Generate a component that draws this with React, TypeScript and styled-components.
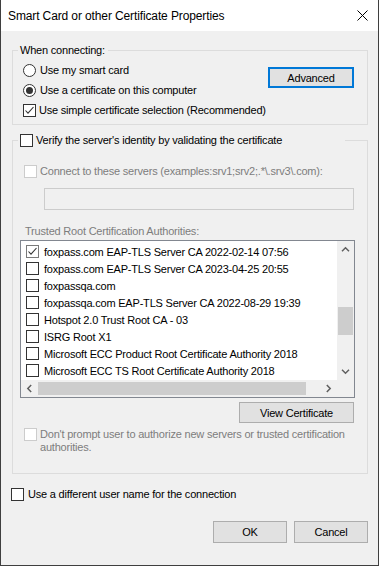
import styled, { createGlobalStyle } from "styled-components"

const GlobalStyle = createGlobalStyle`
  body {
    margin: 0;
    background: #ffffff;
  }
  * {
    box-sizing: border-box;
  }
`

const authorities = [
  { name: "foxpass.com EAP-TLS Server CA 2022-02-14 07:56", checked: true },
  { name: "foxpass.com EAP-TLS Server CA 2023-04-25 20:55" },
  { name: "foxpassqa.com" },
  { name: "foxpassqa.com EAP-TLS Server CA 2022-08-29 19:39" },
  { name: "Hotspot 2.0 Trust Root CA - 03" },
  { name: "ISRG Root X1" },
  { name: "Microsoft ECC Product Root Certificate Authority 2018" },
  { name: "Microsoft ECC TS Root Certificate Authority 2018" },
]

const CheckMark = () => (
  <svg width="11" height="11" viewBox="0 0 11 11">
    <polyline points="1.5,5.5 4,8.2 9.5,2" fill="none" stroke="#333" strokeWidth="1.1" />
  </svg>
)

const Chevron = ({ dir }: { dir: "up" | "down" | "left" | "right" }) => {
  const rot = { up: 0, right: 90, down: 180, left: 270 }[dir]
  return (
    <svg width="9" height="9" viewBox="0 0 9 9" style={{ transform: `rotate(${rot}deg)` }}>
      <polyline points="1,6.2 4.5,2.8 8,6.2" fill="none" stroke="#606060" strokeWidth="1.5" />
    </svg>
  )
}

export default function App() {
  return (
    <>
      <GlobalStyle />
      <Window>
        <TitleBar>
          <Title>Smart Card or other Certificate Properties</Title>
          <svg width="11" height="11" viewBox="0 0 11 11">
            <path d="M0.5 0.5 L10.5 10.5 M10.5 0.5 L0.5 10.5" stroke="#000" strokeWidth="1" />
          </svg>
        </TitleBar>

        <Body>
          <GroupBox>
            <Legend>When connecting:</Legend>
            <ConnectGrid>
              <Options>
                <OptionRow>
                  <Radio />
                  <Label>Use my smart card</Label>
                </OptionRow>
                <OptionRow>
                  <Radio $checked />
                  <Label>Use a certificate on this computer</Label>
                </OptionRow>
                <OptionRow>
                  <CheckBox>
                    <CheckMark />
                  </CheckBox>
                  <Label>Use simple certificate selection (Recommended)</Label>
                </OptionRow>
              </Options>
              <AdvancedButton $default>Advanced</AdvancedButton>
            </ConnectGrid>
          </GroupBox>

          <GroupBox $gap={15}>
            <Legend $width={327}>
              <OptionRow>
                <CheckBox />
                <Label>Verify the server's identity by validating the certificate</Label>
              </OptionRow>
            </Legend>
            <ServerSection>
              <OptionRow>
                <CheckBox $disabled />
                <Label $disabled>Connect to these servers (examples:srv1;srv2;.*\.srv3\.com):</Label>
              </OptionRow>
              <TextBox />
              <SectionLabel>Trusted Root Certification Authorities:</SectionLabel>
              <ListBox>
                <ListContent>
                  {authorities.map((a) => (
                    <ListRow key={a.name}>
                      <CheckBox $soft={a.checked}>{a.checked && <CheckMark />}</CheckBox>
                      <span>{a.name}</span>
                    </ListRow>
                  ))}
                </ListContent>
                <VScroll>
                  <ArrowCell>
                    <Chevron dir="up" />
                  </ArrowCell>
                  <VTrack>
                    <VThumb />
                  </VTrack>
                  <ArrowCell>
                    <Chevron dir="down" />
                  </ArrowCell>
                </VScroll>
                <HScroll>
                  <ArrowCell>
                    <Chevron dir="left" />
                  </ArrowCell>
                  <HTrack>
                    <HThumb />
                  </HTrack>
                  <ArrowCell>
                    <Chevron dir="right" />
                  </ArrowCell>
                </HScroll>
                <Corner />
              </ListBox>
              <ViewButton>View Certificate</ViewButton>
              <PromptRow>
                <CheckBox $disabled />
                <Label $disabled>
                  Don't prompt user to authorize new servers or trusted certification authorities.
                </Label>
              </PromptRow>
            </ServerSection>
          </GroupBox>

          <UserRow>
            <CheckBox />
            <Label>Use a different user name for the connection</Label>
          </UserRow>

          <Footer>
            <DialogButton>OK</DialogButton>
            <DialogButton>Cancel</DialogButton>
          </Footer>
        </Body>
      </Window>
    </>
  )
}

const Window = styled.div`
  width: 379px;
  height: 566px;
  display: flex;
  flex-direction: column;
  background: #f0f0f0;
  border: 1px solid #3f3f3f;
  border-top: none;
  font-family: "Liberation Sans", Arial, sans-serif;
  font-size: 11px;
  letter-spacing: -0.2px;
  color: #000;
`

const TitleBar = styled.div`
  height: 31px;
  flex: none;
  display: flex;
  align-items: center;
  justify-content: space-between;
  padding: 0 10px 0 7px;
  background: #ffffff;
`

const Title = styled.div`
  font-size: 12px;
  letter-spacing: -0.12px;
`

const Body = styled.div`
  display: flex;
  flex-direction: column;
  padding: 19px 10px 0 11px;
`

const GroupBox = styled.div<{ $gap?: number }>`
  display: flex;
  flex-direction: column;
  margin-top: ${(p) => p.$gap ?? 0}px;
  border: 1px solid #dcdcdc;
`

const Legend = styled.div<{ $width?: number }>`
  margin: -8px 0 0 5px;
  height: 15px;
  line-height: 15px;
  padding: 0 3px 0 2px;
  width: ${(p) => (p.$width ? `${p.$width}px` : "fit-content")};
  background: #f0f0f0;
  display: flex;
  align-items: center;
`

const ConnectGrid = styled.div`
  display: grid;
  grid-template-columns: 1fr auto;
  margin-top: 2px;
  padding: 0 13px 4px 10px;
`

const Options = styled.div`
  display: flex;
  flex-direction: column;
`

const OptionRow = styled.div`
  height: 20px;
  display: flex;
  align-items: center;
  gap: 3px;
`

const Label = styled.span<{ $disabled?: boolean }>`
  color: ${(p) => (p.$disabled ? "#7d7d7d" : "#000")};
  white-space: ${(p) => (p.$disabled ? "normal" : "nowrap")};
`

const Radio = styled.span<{ $checked?: boolean }>`
  width: 13px;
  height: 13px;
  flex: none;
  border-radius: 50%;
  border: 1px solid #333;
  background: #fff;
  margin-right: 1px;
  display: flex;
  align-items: center;
  justify-content: center;
  &::after {
    content: "";
    width: 7px;
    height: 7px;
    border-radius: 50%;
    background: ${(p) => (p.$checked ? "#333" : "transparent")};
  }
`

const CheckBox = styled.span<{ $disabled?: boolean; $soft?: boolean }>`
  width: 13px;
  height: 13px;
  flex: none;
  display: flex;
  align-items: center;
  justify-content: center;
  background: #fff;
  border: 1px solid ${(p) => (p.$disabled ? "#cccccc" : p.$soft ? "#7a7a7a" : "#333")};
`

const Button = styled.div`
  display: flex;
  align-items: center;
  justify-content: center;
  background: #e1e1e1;
  border: 1px solid #adadad;
  color: #000;
`

const AdvancedButton = styled(Button)<{ $default?: boolean }>`
  width: 86px;
  height: 21px;
  margin-top: 7px;
  align-self: start;
  border: ${(p) => (p.$default ? "2px solid #0078d7" : "1px solid #adadad")};
`

const ServerSection = styled.div`
  display: flex;
  flex-direction: column;
  padding: 13px 13px 19px 11px;
`

const TextBox = styled.div`
  height: 22px;
  margin: 7px 0 0 20px;
  width: 310px;
  border: 1px solid #cccccc;
  background: #f0f0f0;
`

const SectionLabel = styled.div`
  height: 15px;
  line-height: 15px;
  margin: 14px 0 0 1px;
  color: #7d7d7d;
`

const ListBox = styled.div`
  margin: 1px 0 0 -4px;
  width: 335px;
  height: 158px;
  border: 1px solid #828790;
  background: #fff;
  display: grid;
  grid-template-columns: 1fr 17px;
  grid-template-rows: 1fr 17px;
`

const ListContent = styled.div`
  padding: 2px 0 0 5px;
  overflow: hidden;
  border-right: 1px solid #fff;
`

const ListRow = styled.div`
  height: 17px;
  display: flex;
  align-items: center;
  gap: 5px;
  white-space: nowrap;
`

const VScroll = styled.div`
  display: flex;
  flex-direction: column;
  background: #f0f0f0;
`

const ArrowCell = styled.div`
  width: 17px;
  height: 17px;
  flex: none;
  display: flex;
  align-items: center;
  justify-content: center;
`

const VTrack = styled.div`
  flex: 1;
  display: flex;
  flex-direction: column;
`

const VThumb = styled.div`
  margin: 49px 1px 0 1px;
  height: 28px;
  background: #cdcdcd;
`

const HScroll = styled.div`
  display: flex;
  background: #f0f0f0;
`

const HTrack = styled.div`
  flex: 1;
  display: flex;
  align-items: center;
`

const HThumb = styled.div`
  width: 268px;
  height: 13px;
  background: #cdcdcd;
`

const Corner = styled.div`
  background: #f0f0f0;
`

const ViewButton = styled(Button)`
  align-self: flex-end;
  width: 115px;
  height: 21px;
  margin-top: 4px;
`

const PromptRow = styled.div`
  display: flex;
  align-items: flex-start;
  gap: 3px;
  margin-top: 5px;
  line-height: 13px;
`

const UserRow = styled(OptionRow)`
  margin: 10px 0 0 -1px;
  gap: 4px;
`

const Footer = styled.div`
  display: flex;
  justify-content: flex-end;
  gap: 7px;
  margin-top: 17px;
`

const DialogButton = styled(Button)`
  width: 74px;
  height: 22px;
`
